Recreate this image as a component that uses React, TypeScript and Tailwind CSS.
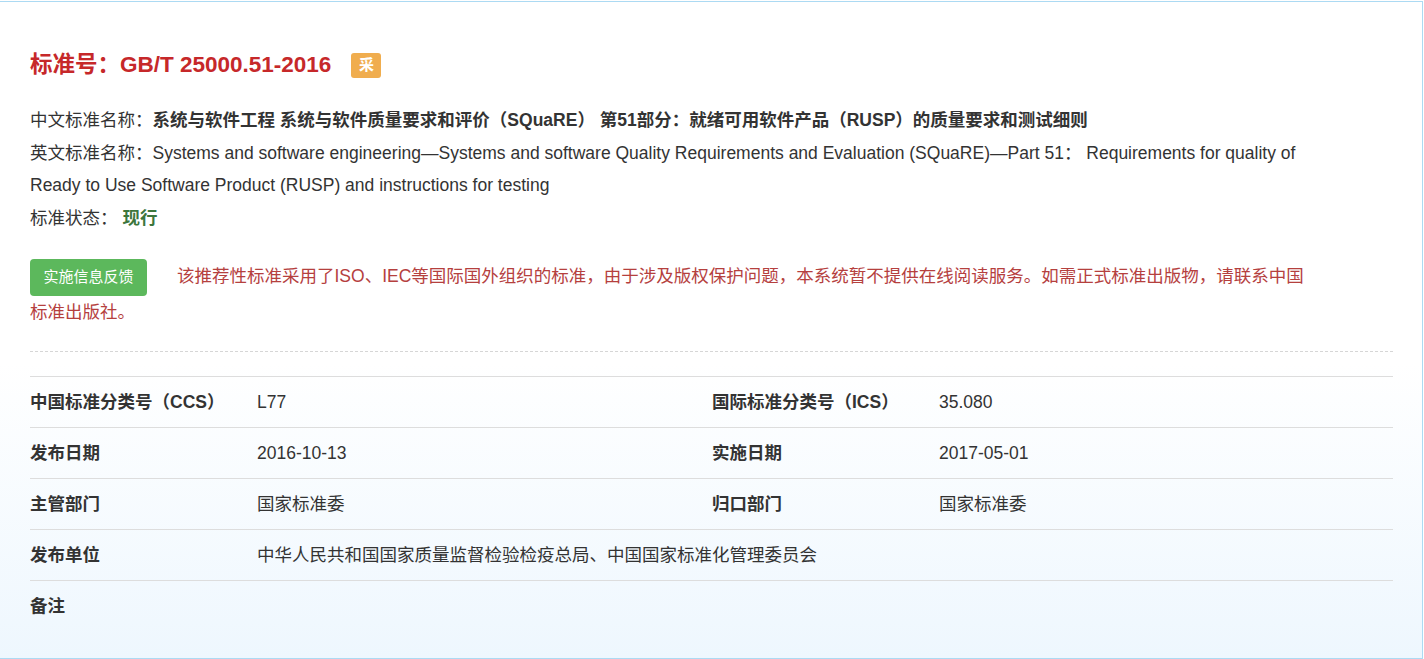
const font = "font-['Liberation_Sans','Noto_Sans_CJK_SC',sans-serif]";

const rows: { label: string; value: string; label2?: string; value2?: string }[] = [
  { label: "中国标准分类号（CCS）", value: "L77", label2: "国际标准分类号（ICS）", value2: "35.080" },
  { label: "发布日期", value: "2016-10-13", label2: "实施日期", value2: "2017-05-01" },
  { label: "主管部门", value: "国家标准委", label2: "归口部门", value2: "国家标准委" },
  { label: "发布单位", value: "中华人民共和国国家质量监督检验检疫总局、中国国家标准化管理委员会" },
  { label: "备注", value: "" },
];

function InfoTable() {
  return (
    <div>
      {rows.map((r) => (
        <div
          key={r.label}
          className="grid grid-cols-[227px_455px_227px_1fr] h-[51px] items-center border-t border-[#dddddd] text-[17.5px] text-[#333333]"
        >
          <div className="font-bold">{r.label}</div>
          <div className={r.label2 ? "" : "col-span-3"}>{r.value}</div>
          {r.label2 && (
            <>
              <div className="font-bold">{r.label2}</div>
              <div>{r.value2}</div>
            </>
          )}
        </div>
      ))}
    </div>
  );
}

export default function App() {
  return (
    <div className={`${font} bg-white`}>
      <div className="mt-px box-border h-[658px] w-[1423px] border-t border-r border-b border-[#acdaf3] bg-gradient-to-b from-white from-55% to-[#eef7fe] pl-[30px] pr-[29px] pt-[48px]">
        <div className="flex items-center h-[30px]">
          <h1 className="text-[22.5px] leading-[30px] font-bold text-[#c6282a]">标准号：GB/T 25000.51-2016</h1>
          <span className="ml-[20px] flex h-[25px] w-[30px] items-center justify-center rounded-[3px] bg-[#f0ad4e] text-[15px] font-bold text-white">
            采
          </span>
        </div>

        <div className="mt-[24px] text-[17.5px] leading-[32.5px] text-[#333333]">
          <p>
            中文标准名称：
            <span className="font-bold">
              系统与软件工程 系统与软件质量要求和评价（SQuaRE） 第51部分：就绪可用软件产品（RUSP）的质量要求和测试细则
            </span>
          </p>
          <p>
            英文标准名称：
            <span>
              Systems and software engineering—Systems and software Quality Requirements and Evaluation (SQuaRE)—Part 51： Requirements for quality of
              <br />
              Ready to Use Software Product (RUSP) and instructions for testing
            </span>
          </p>
          <p>
            标准状态：
            <span className="ml-[5px] font-bold text-[#3c763d]">现行</span>
          </p>
        </div>

        <div className="mt-[24px] text-[17.5px] leading-[36px] text-[#b5403e]">
          <div className="flex h-[36px] items-center">
            <button className="mr-[30px] mt-[2px] flex h-[37px] w-[117px] shrink-0 items-center justify-center rounded-[4px] bg-[#5cb85c] text-[15px] text-white">
              实施信息反馈
            </button>
            <span>
              该推荐性标准采用了ISO、IEC等国际国外组织的标准，由于涉及版权保护问题，本系统暂不提供在线阅读服务。如需正式标准出版物，请联系中国
            </span>
          </div>
          <div>标准出版社。</div>
        </div>

        <div className="mt-[21px] border-t border-dashed border-[#d6d6d6]" />

        <div className="mt-[24px]">
          <InfoTable />
        </div>
      </div>
    </div>
  );
}
